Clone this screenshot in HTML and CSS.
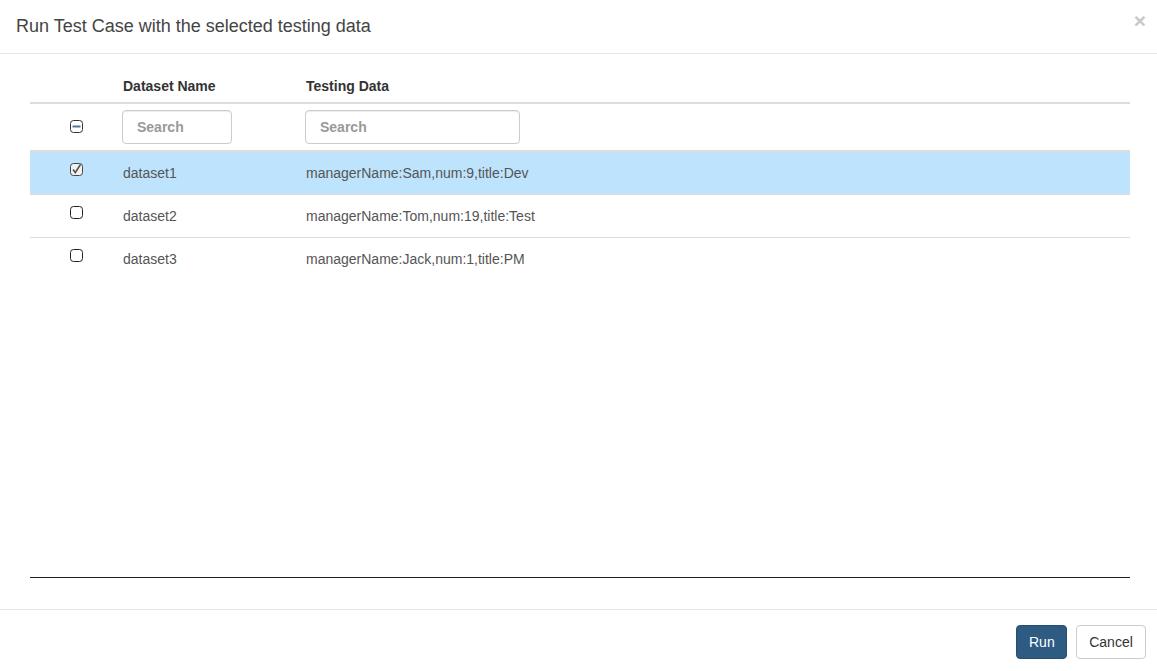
FILE: index.html
```html
<!DOCTYPE html>
<html>
<head>
<meta charset="utf-8">
<link rel="stylesheet" href="styles.css">
</head>
<body>
<div class="modal">
  <div class="modal-header">
    <h4 class="modal-title">Run Test Case with the selected testing data</h4>
    <span class="close">&times;</span>
  </div>
  <div class="modal-body">
    <div class="table-wrap">
      <table class="grid">
        <colgroup>
          <col class="c1"><col class="c2"><col class="c3">
        </colgroup>
        <thead>
          <tr>
            <th class="cb-cell"></th>
            <th>Dataset Name</th>
            <th>Testing Data</th>
          </tr>
        </thead>
        <tbody>
          <tr class="filter">
            <td class="cb-cell">
              <svg class="cb" width="13" height="13" viewBox="0 0 13 13"><rect x="0.5" y="0.5" width="12" height="12" rx="3" fill="#fff" stroke="#333"/><line x1="2.5" y1="6.5" x2="10.5" y2="6.5" stroke="#5a6f9a" stroke-width="2"/></svg>
            </td>
            <td><input class="search s1" placeholder="Search"></td>
            <td><input class="search s2" placeholder="Search"></td>
          </tr>
          <tr class="selected">
            <td class="cb-cell">
              <svg class="cb" width="13" height="13" viewBox="0 0 13 13"><rect x="0.5" y="0.5" width="12" height="12" rx="3" fill="#f2f2f2" stroke="#444"/><path d="M3 6.5 L5.3 9.5 L10.5 1.5" fill="none" stroke="#555" stroke-width="1.6"/></svg>
            </td>
            <td>dataset1</td>
            <td>managerName:Sam,num:9,title:Dev</td>
          </tr>
          <tr>
            <td class="cb-cell">
              <svg class="cb" width="13" height="13" viewBox="0 0 13 13"><rect x="0.5" y="0.5" width="12" height="12" rx="3" fill="#fff" stroke="#222"/></svg>
            </td>
            <td>dataset2</td>
            <td>managerName:Tom,num:19,title:Test</td>
          </tr>
          <tr class="last">
            <td class="cb-cell">
              <svg class="cb" width="13" height="13" viewBox="0 0 13 13"><rect x="0.5" y="0.5" width="12" height="12" rx="3" fill="#fff" stroke="#222"/></svg>
            </td>
            <td>dataset3</td>
            <td>managerName:Jack,num:1,title:PM</td>
          </tr>
        </tbody>
      </table>
    </div>
  </div>
  <div class="modal-footer">
    <button class="btn btn-primary">Run</button>
    <button class="btn btn-default">Cancel</button>
  </div>
</div>
</body>
</html>
```

FILE: styles.css
```css
* { box-sizing: border-box; }
html, body { margin: 0; padding: 0; background: #fff; }
body {
  font-family: "Liberation Sans", Arial, sans-serif;
  font-size: 14px;
  line-height: 20px;
  color: #333;
}
.modal {
  width: 1157px;
  height: 671px;
  display: flex;
  flex-direction: column;
  background: #fff;
}
.modal-header {
  position: relative;
  height: 54px;
  padding: 14px 16px;
  border-bottom: 1px solid #e5e5e5;
}
.modal-title {
  margin: 0;
  font-size: 18px;
  font-weight: normal;
  line-height: 24px;
  color: #444;
}
.close {
  position: absolute;
  right: 11px;
  top: 9px;
  font-size: 21px;
  font-weight: bold;
  line-height: 24px;
  color: #c8c8c8;
}
.modal-body {
  flex: 1;
  padding: 16px 27px 31px 30px;
}
.table-wrap {
  height: 508px;
  border-bottom: 1px solid #222;
}
.grid {
  width: 1100px;
  border-collapse: collapse;
  table-layout: fixed;
}
.c1 { width: 85px; }
.c2 { width: 183px; }
.grid th {
  text-align: left;
  font-weight: bold;
  padding: 6px 8px;
  height: 32px;
  border-bottom: 2px solid #ddd;
  color: #333;
}
.grid td {
  padding: 11px 8px;
  color: #555;
  border-bottom: 1px solid #ddd;
  vertical-align: top;
}
.grid tr.filter td {
  padding: 6px 8px 6px 7px;
  border-bottom: 2px solid #ddd;
}
.grid tr.last td { border-bottom: none; }
.grid td.cb-cell, .grid th.cb-cell {
  padding-left: 16px;
  padding-right: 8px;
  text-align: center;
}
.grid tr.filter td.cb-cell { padding-top: 16px; padding-left: 16px; }
.grid tr.selected td { background: #bee4fd; }
.cb { display: block; margin: 0 auto; }
.search {
  display: block;
  height: 34px;
  padding: 6px 14px;
  border: 1px solid #ccc;
  border-radius: 4px;
  font-family: "Liberation Sans", Arial, sans-serif;
  font-size: 14px;
  font-weight: bold;
  color: #555;
  box-shadow: inset 0 1px 1px rgba(0,0,0,.075);
}
.search::placeholder { color: #999; font-weight: bold; }
.s1 { width: 110px; }
.s2 { width: 215px; }
.modal-footer {
  height: 62px;
  border-top: 1px solid #e5e5e5;
  padding: 15px 11px 11px;
  display: flex;
  justify-content: flex-end;
  gap: 9px;
}
.btn {
  height: 34px;
  padding: 6px 12px;
  font-family: "Liberation Sans", Arial, sans-serif;
  font-size: 14px;
  line-height: 20px;
  border-radius: 4px;
  border: 1px solid transparent;
}
.btn-primary {
  width: 51px;
  background: #2e5b81;
  border-color: #274e70;
  color: #fff;
}
.btn-default {
  width: 70px;
  background: #fff;
  border-color: #ccc;
  color: #333;
}
```
